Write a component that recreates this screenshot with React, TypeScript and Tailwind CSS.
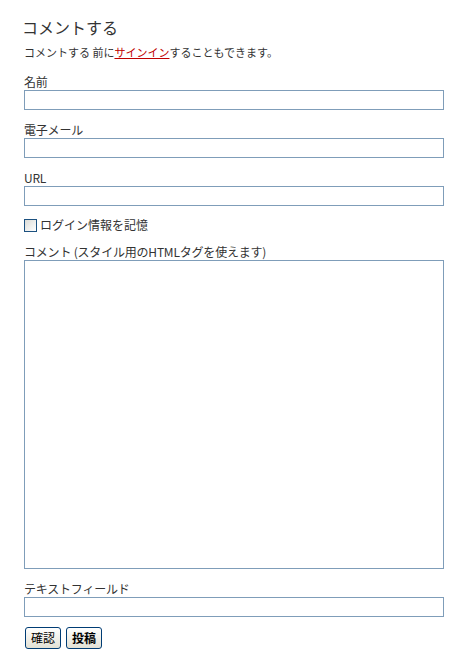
const fieldClass = 'block h-5 w-[420px] border border-[#7f9db9] bg-white';

const Label = ({ children }: { children: React.ReactNode }) => (
  <label className="block h-4 text-[12px] leading-4 tracking-[-0.2px] text-[#333]">{children}</label>
);

const XpButton = ({ children, bold }: { children: React.ReactNode; bold?: boolean }) => (
  <button
    className={
      bold
        ? 'h-[22px] rounded-[3px] border border-[#003c74] bg-gradient-to-b from-white to-[#e3e1d5] px-[5px] text-[12px] leading-4 font-bold text-black'
        : 'h-[22px] rounded-[3px] border border-[#003c74] bg-gradient-to-b from-white to-[#e3e1d5] px-[5px] text-[12px] leading-4 text-black'
    }
  >
    {children}
  </button>
);

export default function App() {
  return (
    <div
      className="min-h-[672px] w-[470px] bg-white pl-6 pt-[15px] text-[#333]"
      style={{ fontFamily: '"Noto Sans CJK JP", "Noto Sans", sans-serif' }}
    >
      <h2 className="ml-[-2px] h-6 text-[16px] leading-6">コメントする</h2>
      <p className="mt-[5px] h-4 text-[11px] leading-4">
        コメントする 前に
        <a href="#" className="text-[#c00000] underline">
          サインイン
        </a>
        することもできます。
      </p>

      <div className="mt-[14px]">
        <Label>名前</Label>
        <input className={fieldClass} />
      </div>

      <div className="mt-3">
        <Label>電子メール</Label>
        <input className={fieldClass} />
      </div>

      <div className="mt-3">
        <Label>URL</Label>
        <input className={fieldClass} />
      </div>

      <div className="mt-3 flex h-[14px] items-center gap-[3px]">
        <span className="block size-[13px] border border-[#1c5180] bg-gradient-to-br from-[#dcdcd7] to-white" />
        <span className="text-[12px] leading-4">ログイン情報を記憶</span>
      </div>

      <div className="mt-3">
        <Label>コメント (スタイル用のHTMLタグを使えます)</Label>
        <textarea className="block h-[309px] w-[420px] resize-none border border-[#7f9db9] bg-white" />
      </div>

      <div className="mt-3">
        <Label>テキストフィールド</Label>
        <input className={fieldClass} />
      </div>

      <div className="mt-[10px] flex gap-[5px] pl-px">
        <XpButton>確認</XpButton>
        <XpButton bold>投稿</XpButton>
      </div>
    </div>
  );
}
